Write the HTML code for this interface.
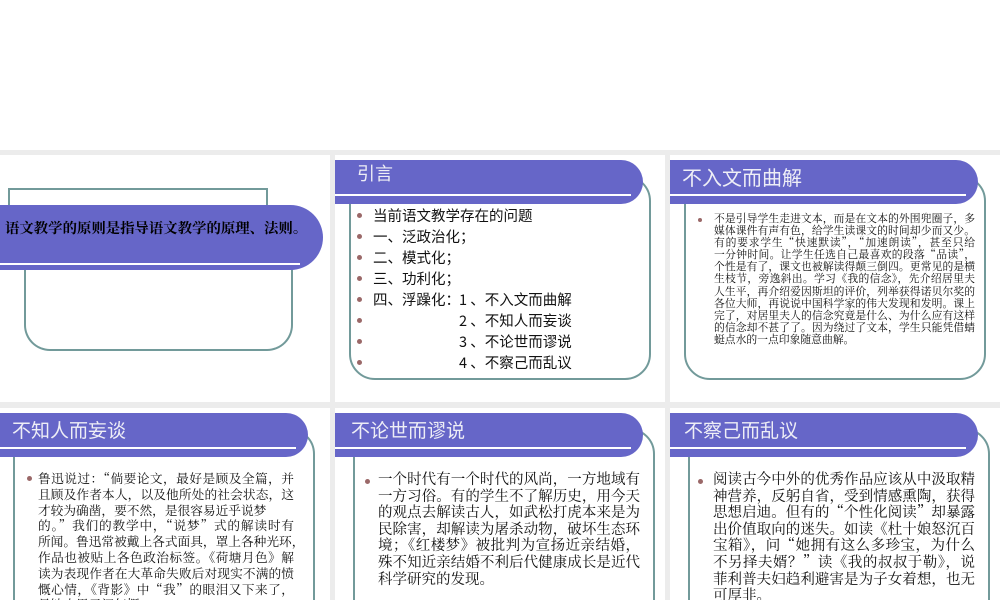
<!DOCTYPE html>
<html><head><meta charset="utf-8"><style>
*{margin:0;padding:0;box-sizing:border-box}
body{width:1000px;height:600px;background:#ececec;position:relative;overflow:hidden;font-family:"Liberation Sans","Noto Sans CJK SC",sans-serif}
.top{position:absolute;left:0;top:0;width:1000px;height:150px;background:#fff}
.s{position:absolute;background:#fff;overflow:hidden}
.bar{position:absolute;left:0;top:5px;width:308px;height:44px;background:#6666c8;border-radius:0 24px 24px 0}
.line{position:absolute;left:0;top:39px;width:296px;height:2px;background:#fff}
.box{position:absolute;left:14px;top:20px;width:302px;height:205px;border:2px solid #729a9a;border-radius:26px}
.t{position:absolute;left:12px;top:8px;color:#eeeef6;font-size:19px;line-height:28px;font-family:"Noto Sans CJK SC",sans-serif}
.txt{position:absolute;color:#111;font-family:"Noto Serif CJK SC",serif}
.txt div{white-space:nowrap;text-align:justify;text-align-last:justify}
.txt div.l{text-align-last:left}
.b{position:absolute;width:6px;height:6px;border-radius:50%;background:#9a6868}
.li{position:absolute;left:38px;font-size:14.5px;line-height:21px;color:#111;white-space:pre;font-family:"Noto Sans CJK SC",sans-serif}
</style></head><body>
<div class="top"></div>

<!-- slide 1 -->
<div class="s" style="left:0;top:155px;width:330px;height:247px">
 <div style="position:absolute;left:8px;top:33px;width:260px;height:60px;border:2px solid #729a9a;border-bottom:none"></div>
 <div style="position:absolute;left:24px;top:80px;width:269px;height:116px;border:2px solid #729a9a;border-top:none;border-radius:0 0 26px 26px"></div>
 <div style="position:absolute;left:0;top:50px;width:323px;height:65px;background:#6666c8;border-radius:0 33px 33px 0"></div>
 <div style="position:absolute;left:0;top:108px;width:300px;height:2px;background:#fff"></div>
 <div style="position:absolute;left:5px;top:63px;font-size:14.4px;font-weight:bold;line-height:20px;white-space:nowrap;color:#000;font-family:'Noto Serif CJK SC',serif">语文教学的原则是指导语文教学的原理、法则。</div>
</div>

<!-- slide 2 -->
<div class="s" style="left:335px;top:155px;width:330px;height:247px">
 <div class="box"></div>
 <div class="bar"></div><div class="line"></div>
 <div class="t" style="left:22px;top:4px;font-size:18px">引言</div>
 <div class="b" style="left:22px;top:58px;width:5px;height:5px"></div>
 <div class="b" style="left:22px;top:79px;width:5px;height:5px"></div>
 <div class="b" style="left:22px;top:100px;width:5px;height:5px"></div>
 <div class="b" style="left:22px;top:121px;width:5px;height:5px"></div>
 <div class="b" style="left:22px;top:142px;width:5px;height:5px"></div>
 <div class="b" style="left:22px;top:163px;width:5px;height:5px"></div>
 <div class="b" style="left:22px;top:184px;width:5px;height:5px"></div>
 <div class="b" style="left:22px;top:205px;width:5px;height:5px"></div>
 <div class="li" style="left:38px;top:50px">当前语文教学存在的问题
一、泛政治化；
二、模式化；
三、功利化；
四、浮躁化：</div>
 <div class="li" style="left:124px;top:134px">1 、不入文而曲解
2 、不知人而妄谈
3 、不论世而谬说
4 、不察己而乱议</div>
</div>

<!-- slide 3 -->
<div class="s" style="left:670px;top:155px;width:330px;height:247px">
 <div class="box"></div>
 <div class="bar"></div><div class="line"></div>
 <div class="t" style="left:12px;top:8px;font-size:20px">不入文而曲解</div>
 <div class="b" style="left:28px;top:63px;width:4px;height:4px"></div>
 <div class="txt" style="left:44px;top:58px;width:261px;font-size:10.8px;line-height:12.1px">
<div>不是引导学生走进文本，而是在文本的外围兜圈子，多</div>
<div>媒体课件有声有色，给学生读课文的时间却少而又少。</div>
<div>有的要求学生“快速默读”，“加速朗读”，甚至只给</div>
<div>一分钟时间。让学生任选自己最喜欢的段落“品读”，</div>
<div>个性是有了，课文也被解读得颠三倒四。更常见的是横</div>
<div>生枝节，旁逸斜出。学习《我的信念》，先介绍居里夫</div>
<div>人生平，再介绍爱因斯坦的评价，列举获得诺贝尔奖的</div>
<div>各位大师，再说说中国科学家的伟大发现和发明。课上</div>
<div>完了，对居里夫人的信念究竟是什么、为什么应有这样</div>
<div>的信念却不甚了了。因为绕过了文本，学生只能凭借蜻</div>
<div class="l">蜓点水的一点印象随意曲解。</div>
 </div>
</div>

<!-- slide 4 -->
<div class="s" style="left:0;top:408px;width:330px;height:192px">
 <div class="box" style="left:13px"></div>
 <div class="bar"></div><div class="line"></div>
 <div class="t">不知人而妄谈</div>
 <div class="b" style="left:27px;top:68px;width:5px;height:5px"></div>
 <div class="txt" style="left:38px;top:62px;width:256px;font-size:12.7px;line-height:15.8px">
<div>鲁迅说过：“倘要论文，最好是顾及全篇，并</div>
<div>且顾及作者本人，以及他所处的社会状态，这</div>
<div class="l">才较为确凿，要不然，是很容易近乎说梦</div>
<div>的。”我们的教学中，“说梦”式的解读时有</div>
<div>所闻。鲁迅常被戴上各式面具，罩上各种光环，</div>
<div>作品也被贴上各色政治标签。《荷塘月色》解</div>
<div>读为表现作者在大革命失败后对现实不满的愤</div>
<div>慨心情，《背影》中“我”的眼泪又下来了，</div>
<div class="l">是缺少男子汉气概。</div>
 </div>
</div>

<!-- slide 5 -->
<div class="s" style="left:335px;top:408px;width:330px;height:192px">
 <div class="box" style="left:18px"></div>
 <div class="bar"></div><div class="line"></div>
 <div class="t" style="left:16px">不论世而谬说</div>
 <div class="b" style="left:30px;top:71px;width:5px;height:5px"></div>
 <div class="txt" style="left:43px;top:63px;width:262px;font-size:14.5px;line-height:16.6px">
<div>一个时代有一个时代的风尚，一方地域有</div>
<div>一方习俗。有的学生不了解历史，用今天</div>
<div>的观点去解读古人，如武松打虎本来是为</div>
<div>民除害，却解读为屠杀动物，破坏生态环</div>
<div>境；《红楼梦》被批判为宣扬近亲结婚，</div>
<div>殊不知近亲结婚不利后代健康成长是近代</div>
<div class="l">科学研究的发现。</div>
 </div>
</div>

<!-- slide 6 -->
<div class="s" style="left:670px;top:408px;width:330px;height:192px">
 <div class="box" style="left:18px"></div>
 <div class="bar"></div><div class="line"></div>
 <div class="t" style="left:14px">不察己而乱议</div>
 <div class="b" style="left:28px;top:71px;width:5px;height:5px"></div>
 <div class="txt" style="left:43px;top:63px;width:262px;font-size:14.5px;line-height:16.6px">
<div>阅读古今中外的优秀作品应该从中汲取精</div>
<div>神营养，反躬自省，受到情感熏陶，获得</div>
<div>思想启迪。但有的“个性化阅读”却暴露</div>
<div>出价值取向的迷失。如读《杜十娘怒沉百</div>
<div>宝箱》，问“她拥有这么多珍宝，为什么</div>
<div>不另择夫婿？”读《我的叔叔于勒》，说</div>
<div>菲利普夫妇趋利避害是为子女着想，也无</div>
<div class="l">可厚非。</div>
 </div>
</div>
</body></html>
